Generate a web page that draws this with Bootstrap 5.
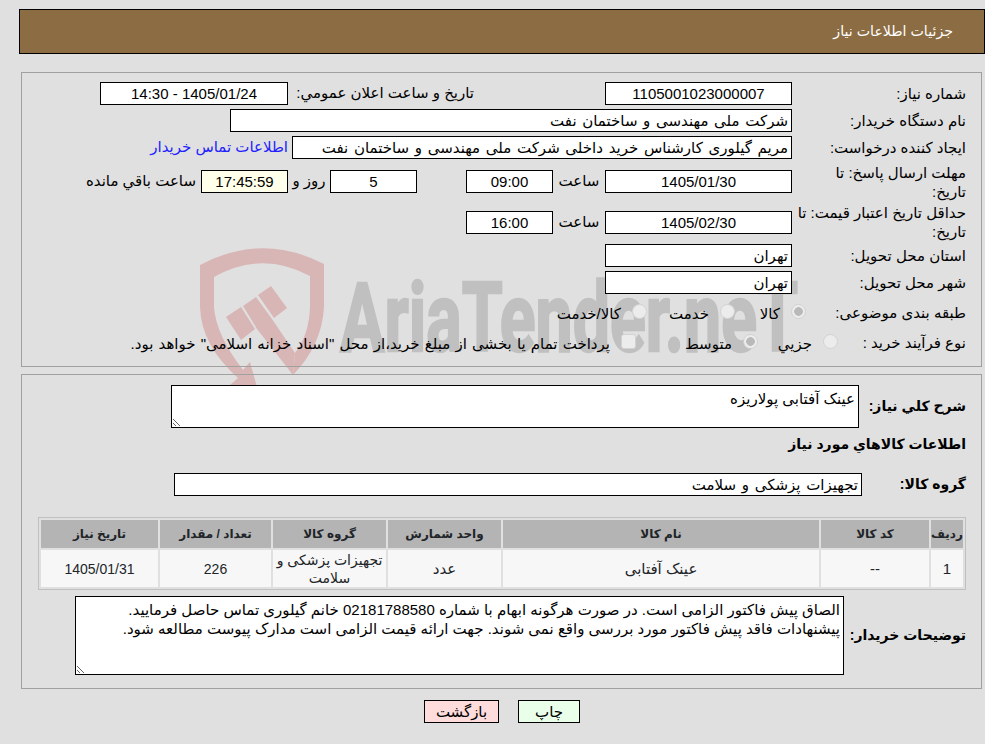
<!DOCTYPE html>
<html lang="fa" dir="rtl">
<head>
    <meta charset="UTF-8">
    <meta name="viewport" content="width=device-width, initial-scale=1.0">
    <title>جزئیات اطلاعات نیاز</title>
    <link href="https://cdn.jsdelivr.net/npm/bootstrap@5.3.1/dist/css/bootstrap.min.css" rel="stylesheet">
    <style>
        html, body { height: 100%; }
        body { background: #e0e0e0; color: #000; font-family: "Liberation Sans", "DejaVu Sans", sans-serif; font-size: 15px; overflow: hidden; }
        .page { position: relative; height: 744px; padding-top: 9px; }
        .watermark { position: absolute; left: 0; top: 0; z-index: 0; direction: ltr; }
        .watermark text { font-family: Roboto, sans-serif; font-weight: 700; font-size: 96px; fill: #c0c0c0; stroke: #c0c0c0; stroke-width: 2.5px; }
        .content { position: relative; z-index: 1; }
        .title-bar { margin-left: 19px; height: 45px; padding-right: 31px; background: #8c6c42; border: 1px solid #000; color: #fff; font-size: 14.2px; }
        .panel { margin: 0 3px 0 21px; border: 1px solid #a0a0a0; padding-right: 15px; }
        .panel-top { margin-top: 18px; height: 295px; padding-top: 9px; }
        .panel-main { margin-top: 7px; height: 315px; padding-top: 10px; padding-left: 16px; }
        .row-line { height: 23px; margin-bottom: 4px; }
        .row-tall { height: 37px; }
        .row-tall2 { height: 36px; }
        .row-opt { height: 30px; margin: 0; }
        .lbl { width: 174px; flex: none; line-height: 19px; white-space: nowrap; }
        .box { height: 23px; border: 1px solid #000; background: #fff; flex: none; text-align: center; line-height: 21px; padding: 0 3px; overflow: hidden; white-space: nowrap; }
        .box-start { text-align: right; word-spacing: 1.5px; }
        .w-date { width: 187px; }
        .w-time { width: 87px; }
        .w-left { width: 188px; }
        .w-buyer { width: 562px; }
        .w-creator { width: 500px; }
        .word { width: 52px; flex: none; text-align: center; }
        .word-day { width: 42px; flex: none; text-align: center; }
        .pub-label { width: 181px; margin-right: 131px; margin-left: 5px; flex: none; }
        .contact { margin-right: 4px; color: #2222ff; text-decoration: none; }
        .gap-day { margin-right: 49px; }
        .remain { background: #ffffea; }
        .remain-label { margin-right: 5px; }
        .lbl-kind { width: 160px; flex: none; }
        .lbl-proc { width: 128px; flex: none; padding-top: 1px; }
        .mark { appearance: none; width: 15px; height: 15px; margin: 0; flex: none; border: 1px solid #d2d2d2; border-radius: 50%; background: #ececec; position: relative; top: -3px; }
        .mark:checked { background: radial-gradient(circle, #b9b9b9 0 4px, #ececec 4.6px); }
        .mark-box { border-radius: 3px; }
        .opt { flex: none; display: flex; align-items: center; gap: 11px; padding-top: 3px; }
        .opt-kala { width: 71px; }
        .opt-service { width: 88px; }
        .opt-small { width: 80px; }
        .opt-medium { width: 122px; }
        .opt-long { word-spacing: 1px; }
        .sub-label { font-weight: 700; font-size: 14px; }
        .lbl-desc { width: 107px; flex: none; }
        .lbl-group { width: 104px; flex: none; }
        .lbl-notes { width: 122px; flex: none; }
        textarea.area { display: block; border: 1px solid #000; border-radius: 0; background: #fff; padding: 2px 3px; margin: 0; font: inherit; color: #000; outline: 0; }
        .area-desc { width: 688px; height: 43px; }
        textarea.area-notes { width: 769px; height: 79px; line-height: 18.5px; padding-top: 4px; }
        .heading { margin-top: 6px; height: 20px; line-height: 20px; }
        .group-row { margin-top: 19px; }
        .w-group { width: 688px; }
        .need-table { width: 928px; margin: 21px 0 6px; table-layout: fixed; border-collapse: separate; border-spacing: 2px; border: 1px solid #c0c0c0; --bs-table-bg: transparent; }
        .need-table > :not(caption) > * > * { padding: 0; border: 0; text-align: center; vertical-align: middle; box-shadow: none; }
        .need-table th { background: #b4b4b4; height: 28px; font-size: 12px; font-weight: 700; }
        .need-table td { background: #f7f7f7; height: 37px; line-height: 18px; }
        .need-table td.num { font-size: 14px; }
        .need-table td.cell-wrap { font-size: 14px; white-space: nowrap; }
        .c1 { width: 32px; } .c2 { width: 108px; } .c3 { width: 316px; } .c4 { width: 113px; } .c5 { width: 113px; } .c6 { width: 111px; } .c7 { width: 117px; }
        .actions { margin-top: 11px; padding-left: 19px; gap: 19px; }
        .act { height: 23px; padding: 0; border: 1px solid #000; border-radius: 0; font-size: 15px; line-height: 21px; color: #000; }
        .act-print { width: 62px; background: #eaffea; }
        .act-back { width: 75px; background: #ffdcdc; }
    </style>
</head>
<body>
<div class="page">
    <svg class="watermark" width="985" height="440" viewBox="0 0 985 440" aria-hidden="true">
        <g fill="#d9b6b6">
            <path d="M200 265Q262 232 324 264V307Q322 345 293 375L295 353Q309 335 310 307V276Q262 250 214 277V307Q216 335 243 370L250 362L257 387L230 385L238 378Q201 345 200 307Z"/>
            <path d="M226 317L241 307L255 329L241 340Z"/>
            <path d="M243 306L256 297L272 319L295 353L293 375L257 329Z"/>
            <path d="M258 295L271 286L287 308L274 318Z"/>
        </g>
        <text x="340" y="351" text-anchor="start" textLength="458" lengthAdjust="spacingAndGlyphs">AriaTender.neT</text>
    </svg>

    <div class="content">
        <div class="title-bar d-flex align-items-center">جزئیات اطلاعات نیاز</div>

        <div class="panel panel-top">
            <div class="d-flex align-items-center row-line">
                <div class="lbl">شماره نیاز:</div>
                <div class="box w-date">1105001023000007</div>
                <div class="pub-label">تاریخ و ساعت اعلان عمومي:</div>
                <div class="box w-left">1405/01/24 - 14:30</div>
            </div>
            <div class="d-flex align-items-center row-line">
                <div class="lbl">نام دستگاه خریدار:</div>
                <div class="box box-start w-buyer">شرکت ملی مهندسی و ساختمان نفت</div>
            </div>
            <div class="d-flex align-items-center row-line">
                <div class="lbl">ایجاد کننده درخواست:</div>
                <div class="box box-start w-creator">مریم گیلوری کارشناس خرید داخلی شرکت ملی مهندسی و ساختمان نفت</div>
                <a class="contact" href="#">اطلاعات تماس خریدار</a>
            </div>
            <div class="d-flex align-items-center row-line row-tall">
                <div class="lbl">مهلت ارسال پاسخ: تا<br>تاریخ:</div>
                <div class="box w-date">1405/01/30</div>
                <div class="word">ساعت</div>
                <div class="box w-time">09:00</div>
                <div class="box w-time gap-day">5</div>
                <div class="word-day">روز و</div>
                <div class="box w-time remain">17:45:59</div>
                <div class="remain-label">ساعت باقي مانده</div>
            </div>
            <div class="d-flex align-items-center row-line row-tall2">
                <div class="lbl">حداقل تاریخ اعتبار قیمت: تا<br>تاریخ:</div>
                <div class="box w-date">1405/02/30</div>
                <div class="word">ساعت</div>
                <div class="box w-time">16:00</div>
            </div>
            <div class="d-flex align-items-center row-line">
                <div class="lbl">استان محل تحویل:</div>
                <div class="box box-start w-date">تهران</div>
            </div>
            <div class="d-flex align-items-center row-line">
                <div class="lbl">شهر محل تحویل:</div>
                <div class="box box-start w-date">تهران</div>
            </div>
            <div class="d-flex align-items-center row-line row-opt">
                <div class="lbl-kind">طبقه بندی موضوعی:</div>
                <label class="opt opt-kala"><input class="mark" type="radio" name="kind" checked disabled>کالا</label>
                <label class="opt opt-service"><input class="mark" type="radio" name="kind" disabled>خدمت</label>
                <label class="opt"><input class="mark" type="radio" name="kind" disabled>کالا/خدمت</label>
            </div>
            <div class="d-flex align-items-center row-line row-opt">
                <div class="lbl-proc">نوع فرآیند خرید :</div>
                <label class="opt opt-small"><input class="mark" type="radio" name="proc" disabled>جزیي</label>
                <label class="opt opt-medium"><input class="mark" type="radio" name="proc" checked disabled>متوسط</label>
                <label class="opt opt-long"><input class="mark mark-box" type="checkbox" disabled>پرداخت تمام یا بخشی از مبلغ خرید،از محل "اسناد خزانه اسلامی" خواهد بود.</label>
            </div>
        </div>

        <div class="panel panel-main">
            <div class="d-flex align-items-center">
                <div class="lbl-desc sub-label">شرح كلي نياز:</div>
                <textarea class="area area-desc" readonly>عینک آفتابی پولاریزه</textarea>
            </div>
            <div class="heading sub-label">اطلاعات كالاهاي مورد نياز</div>
            <div class="d-flex align-items-center group-row">
                <div class="lbl-group sub-label">گروه کالا:</div>
                <div class="box box-start w-group">تجهیزات پزشکی و سلامت</div>
            </div>
            <table class="table need-table">
                <colgroup>
                    <col class="c1"><col class="c2"><col class="c3"><col class="c4"><col class="c5"><col class="c6"><col class="c7">
                </colgroup>
                <thead>
                    <tr><th>ردیف</th><th>کد کالا</th><th>نام کالا</th><th>واحد شمارش</th><th>گروه کالا</th><th>تعداد / مقدار</th><th>تاریخ نیاز</th></tr>
                </thead>
                <tbody>
                    <tr><td>1</td><td>--</td><td>عینک آفتابی</td><td>عدد</td><td class="cell-wrap">تجهیزات پزشکی و<br>سلامت</td><td class="num">226</td><td class="num">1405/01/31</td></tr>
                </tbody>
            </table>
            <div class="d-flex align-items-center">
                <div class="lbl-notes sub-label">توضیحات خریدار:</div>
                <textarea class="area area-notes" readonly>الصاق پیش فاکتور الزامی است. در صورت هرگونه ابهام با شماره 02181788580 خانم گیلوری تماس حاصل فرمایید.
پیشنهادات فاقد پیش فاکتور مورد بررسی واقع نمی شوند. جهت ارائه قیمت الزامی است مدارک پیوست مطالعه شود.</textarea>
            </div>
        </div>

        <div class="d-flex justify-content-center actions">
            <button type="button" class="btn act act-print">چاپ</button>
            <button type="button" class="btn act act-back">بازگشت</button>
        </div>
    </div>
</div>
<script src="https://cdn.jsdelivr.net/npm/bootstrap@5.3.1/dist/js/bootstrap.bundle.min.js"></script>
</body>
</html>
